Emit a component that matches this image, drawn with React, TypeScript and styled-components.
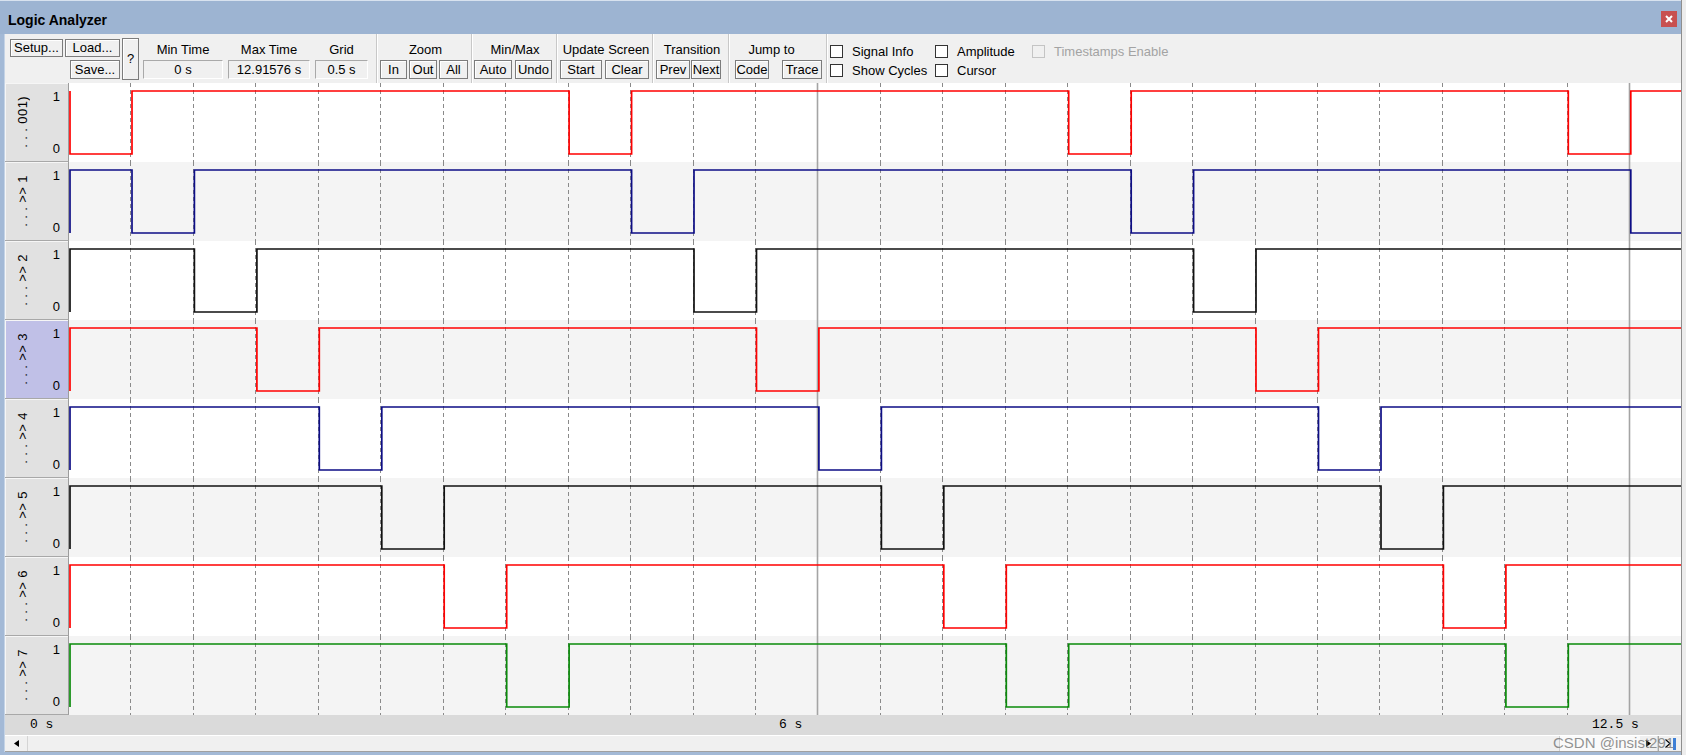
import React from 'react';
import styled, { createGlobalStyle } from 'styled-components';

const GRID = 62.45;
const ROW_H = 79;
const WAVE_W = 1612;
const HIGH_Y = 8;
const LOW_Y = 71;

interface ISignal {
  name: string;
  color: string;
  phase: number;
}

interface IGroup {
  label: string;
  width: number;
  pad: number;
  gap: number;
  shift?: number;
  buttons: { label: string; width: number }[];
}

const signals: ISignal[] = [
  { name: '. . . 001)', color: '#ff0000', phase: 0 },
  { name: '. . . >> 1', color: '#0d0d85', phase: 1 },
  { name: '. . . >> 2', color: '#111111', phase: 2 },
  { name: '. . . >> 3', color: '#ff0000', phase: 3 },
  { name: '. . . >> 4', color: '#0d0d85', phase: 4 },
  { name: '. . . >> 5', color: '#111111', phase: 5 },
  { name: '. . . >> 6', color: '#ff0000', phase: 6 },
  { name: '. . . >> 7', color: '#0a8a0a', phase: 7 },
];

const SELECTED_ROW = 3;

const groups: IGroup[] = [
  { label: 'Zoom', width: 93, pad: 2, gap: 2, buttons: [{ label: 'In', width: 27 }, { label: 'Out', width: 28 }, { label: 'All', width: 29 }] },
  { label: 'Min/Max', width: 83, pad: 1, gap: 3, buttons: [{ label: 'Auto', width: 38 }, { label: 'Undo', width: 37 }] },
  { label: 'Update Screen', width: 94, pad: 2, gap: 3, buttons: [{ label: 'Start', width: 42 }, { label: 'Clear', width: 44 }] },
  { label: 'Transition', width: 74, pad: 2, gap: 1, buttons: [{ label: 'Prev', width: 34 }, { label: 'Next', width: 30 }] },
  { label: 'Jump to', width: 96, pad: 5, gap: 13, shift: 18, buttons: [{ label: 'Code', width: 34 }, { label: 'Trace', width: 40 }] },
];

const GlobalStyle = createGlobalStyle`
  html, body {
    margin: 0;
    padding: 0;
    background: #ffffff;
  }

  body {
    font-family: "Liberation Sans", Arial, sans-serif;
    font-size: 13px;
    color: #000;
    overflow: hidden;
  }
`;

const Window = styled.div`
  width: 1686px;
  height: 755px;
  display: flex;
  position: relative;
  overflow: hidden;
`;

const Frame = styled.div`
  width: 1681px;
  display: flex;
  flex-direction: column;
`;

const RightEdge = styled.div`
  width: 5px;
  box-sizing: border-box;
  border-left: 1px solid #8e8e8e;
  background: #ededed;
`;

const TitleBar = styled.div`
  height: 34px;
  box-sizing: border-box;
  border-top: 1px solid #d8e2ef;
  background: #9db4d2;
  display: flex;
  align-items: center;
  justify-content: space-between;
  padding: 0 4px 0 8px;
`;

const Title = styled.span`
  font-weight: bold;
  font-size: 14px;
  padding-top: 4px;
`;

const CloseButton = styled.div`
  width: 16px;
  height: 16px;
  margin-top: 2px;
  background: #c85050;
  display: flex;
  align-items: center;
  justify-content: center;
`;

const Body = styled.div`
  display: flex;
  height: 718px;
`;

const SideEdge = styled.div`
  width: 5px;
  box-sizing: border-box;
  background: #a3b9d6;
  border-right: 1px solid #c4d3e6;
`;

const Content = styled.div`
  width: 1676px;
  display: flex;
  flex-direction: column;
`;

const BottomEdge = styled.div`
  height: 3px;
  background: #a3b9d6;
`;

const Toolbar = styled.div`
  height: 49px;
  background: #f0f0f0;
  display: flex;
  align-items: stretch;
`;

const FileGrid = styled.div`
  display: grid;
  grid-template-columns: 53px 55px 17px;
  grid-template-rows: 18px 19px;
  column-gap: 2px;
  row-gap: 3px;
  padding: 5px 0 0 5px;
`;

const Button = styled.button<{ $w?: number; $h?: number }>`
  width: ${({ $w }) => ($w ? `${$w}px` : '100%')};
  height: ${({ $h }) => ($h ? `${$h}px` : '19px')};
  box-sizing: border-box;
  padding: 0;
  margin: 0;
  font-family: "Liberation Sans", Arial, sans-serif;
  font-size: 13px;
  line-height: 16px;
  color: #000;
  background: #f0f0f0;
  border: 1px solid #7c7c7c;
  box-shadow: inset 1px 1px 0 #ffffff;
  white-space: nowrap;
  overflow: hidden;
`;

const SetupButton = styled(Button)`
  grid-column: 1;
  grid-row: 1;
`;

const LoadButton = styled(Button)`
  grid-column: 2;
  grid-row: 1;
`;

const SaveButton = styled(Button)`
  grid-column: 2;
  grid-row: 2;
  justify-self: end;
`;

const HelpButton = styled(Button)`
  grid-column: 3;
  grid-row: 1 / span 2;
  margin-top: -1px;
  height: 42px;
`;

const TimeGroup = styled.div`
  display: flex;
  gap: 5px;
  margin-left: 4px;
  margin-right: 8px;
`;

const Column = styled.div`
  display: flex;
  flex-direction: column;
  align-items: center;
  padding-top: 8px;
`;

const GroupLabel = styled.div<{ $shift?: number }>`
  height: 16px;
  line-height: 16px;
  white-space: nowrap;
  text-align: center;
  margin-right: ${({ $shift }) => $shift || 0}px;
`;

const ValueBox = styled.div<{ $w: number }>`
  width: ${({ $w }) => $w}px;
  height: 19px;
  margin-top: 2px;
  box-sizing: border-box;
  border: 1px solid;
  border-color: #a9a9a9 #ffffff #ffffff #a9a9a9;
  background: #f0f0f0;
  text-align: center;
  line-height: 17px;
`;

const Separator = styled.div`
  width: 0;
  border-left: 1px solid #c8c8c8;
  border-right: 1px solid #ffffff;
`;

const Group = styled.div<{ $w: number; $pad: number }>`
  width: ${({ $w }) => $w}px;
  box-sizing: border-box;
  padding-left: ${({ $pad }) => $pad}px;
  padding-top: 8px;
  display: flex;
  flex-direction: column;
`;

const ButtonRow = styled.div<{ $gap: number }>`
  display: flex;
  gap: ${({ $gap }) => $gap}px;
  margin-top: 2px;
`;

const CheckGrid = styled.div`
  display: grid;
  grid-template-columns: 105px 97px auto;
  grid-template-rows: 19px 19px;
  padding: 8px 0 0 2px;
`;

const CheckItem = styled.label<{ $disabled?: boolean }>`
  display: flex;
  align-items: center;
  gap: 9px;
  white-space: nowrap;
  color: ${({ $disabled }) => ($disabled ? '#a3a3a3' : '#000')};
`;

const CheckBox = styled.span<{ $disabled?: boolean }>`
  width: 13px;
  height: 13px;
  box-sizing: border-box;
  border: 1px solid ${({ $disabled }) => ($disabled ? '#c4c4c4' : '#333333')};
  background: ${({ $disabled }) => ($disabled ? '#f0f0f0' : '#ffffff')};
`;

const SignalList = styled.div`
  display: flex;
  flex-direction: column;
`;

const Row = styled.div`
  display: flex;
  height: ${ROW_H}px;
`;

const LabelCell = styled.div<{ $selected: boolean }>`
  width: 64px;
  box-sizing: border-box;
  display: flex;
  background: ${({ $selected }) => ($selected ? '#c0c0e7' : '#e1e1e1')};
  border-right: 1px solid #9c9c9c;
  border-bottom: 1px solid #a8a8a8;
  box-shadow: inset 1px 1px 0 #f6f6f6;
`;

const NameBox = styled.div`
  width: 34px;
  display: flex;
  align-items: center;
  justify-content: center;
`;

const SignalName = styled.span`
  writing-mode: vertical-rl;
  transform: rotate(180deg);
  white-space: nowrap;
  font-size: 13px;
  letter-spacing: 0.4px;
`;

const LevelColumn = styled.div`
  flex: 1;
  display: flex;
  flex-direction: column;
  justify-content: space-between;
  align-items: flex-end;
  padding: 6px 8px 5px 0;
  line-height: 15px;
`;

const WaveCell = styled.div<{ $shaded: boolean }>`
  width: ${WAVE_W}px;
  height: ${ROW_H}px;
  background: ${({ $shaded }) => ($shaded ? '#f4f4f4' : '#ffffff')};

  svg {
    display: block;
  }
`;

const TimeAxis = styled.div`
  height: 20px;
  background: #dadada;
  position: relative;
  font-family: "Liberation Mono", "DejaVu Sans Mono", monospace;
  font-size: 13px;
`;

const AxisLabel = styled.span`
  position: absolute;
  top: 0;
  line-height: 20px;
  white-space: pre;
`;

const ScrollBar = styled.div`
  height: 17px;
  box-sizing: border-box;
  border-top: 1px solid #ffffff;
  border-bottom: 1px solid #a0a0a0;
  background: #f0f0f0;
  display: flex;
`;

const ScrollArrow = styled.div<{ $w: number }>`
  width: ${({ $w }) => $w}px;
  display: flex;
  align-items: center;
  justify-content: center;
  border-right: 1px solid #d4d4d4;
`;

const ScrollTrack = styled.div`
  flex: 1;
`;

const ScrollThumb = styled.div`
  width: 80px;
  background: #fafafa;
  border-left: 1px solid #d0d0d0;
`;

const EndButton = styled.div`
  width: 22px;
  display: flex;
  align-items: center;
  justify-content: center;
  gap: 2px;
  border-left: 1px solid #a8a8a8;
`;

const Watermark = styled.span`
  position: absolute;
  left: 1553px;
  top: 734px;
  font-size: 15px;
  line-height: 18px;
  color: rgba(110, 110, 110, 0.75);
  white-space: nowrap;
`;

const buildPath = (phase: number) => {
  const end = WAVE_W / GRID;
  const edges: number[] = [];
  for (let s = phase; s < end; s += 8) {
    edges.push(s, s + 1);
  }
  let level = phase === 0 ? LOW_Y : HIGH_Y;
  const other = level === LOW_Y ? HIGH_Y : LOW_Y;
  let d = `M 1 ${other} V ${level}`;
  edges.forEach((t) => {
    if (t <= 0 || t >= end) return;
    const x = t * GRID + 0.5;
    level = level === LOW_Y ? HIGH_Y : LOW_Y;
    d += ` H ${x.toFixed(1)} V ${level}`;
  });
  d += ` H ${WAVE_W}`;
  return d;
};

const ticks = Array.from({ length: 25 }, (_, i) => i + 1);

function Waveform({ signal }: { signal: ISignal }) {
  return (
    <svg width={WAVE_W} height={ROW_H}>
      {ticks.map((t) => {
        const x = Math.round(t * GRID - 1) + 0.5;
        const major = t === 12 || t === 25;
        return (
          <line
            key={t}
            x1={x}
            x2={x}
            y1={0}
            y2={ROW_H}
            stroke={major ? '#a4a4a4' : '#8a8a8a'}
            strokeWidth={major ? 1.6 : 1}
            strokeDasharray={major ? undefined : '4 3'}
          />
        );
      })}
      <path d={buildPath(signal.phase)} fill="none" stroke={signal.color} strokeWidth={1.7} />
    </svg>
  );
}

function App() {
  return (
    <Window>
      <GlobalStyle />
      <Frame>
        <TitleBar>
          <Title>Logic Analyzer</Title>
          <CloseButton>
            <svg width="8" height="8" viewBox="0 0 8 8">
              <path d="M1 1 L7 7 M7 1 L1 7" stroke="#fff" strokeWidth="2" />
            </svg>
          </CloseButton>
        </TitleBar>
        <Body>
          <SideEdge />
          <Content>
            <Toolbar>
              <FileGrid>
                <SetupButton $h={18}>Setup...</SetupButton>
                <LoadButton $h={18}>Load...</LoadButton>
                <SaveButton $w={50}>Save...</SaveButton>
                <HelpButton>?</HelpButton>
              </FileGrid>
              <TimeGroup>
                <Column>
                  <GroupLabel>Min Time</GroupLabel>
                  <ValueBox $w={80}>0 s</ValueBox>
                </Column>
                <Column>
                  <GroupLabel>Max Time</GroupLabel>
                  <ValueBox $w={82}>12.91576 s</ValueBox>
                </Column>
                <Column>
                  <GroupLabel>Grid</GroupLabel>
                  <ValueBox $w={53}>0.5 s</ValueBox>
                </Column>
              </TimeGroup>
              {groups.map((g) => (
                <React.Fragment key={g.label}>
                  <Separator />
                  <Group $w={g.width} $pad={g.pad}>
                    <GroupLabel $shift={g.shift}>{g.label}</GroupLabel>
                    <ButtonRow $gap={g.gap}>
                      {g.buttons.map((b) => (
                        <Button key={b.label} $w={b.width}>{b.label}</Button>
                      ))}
                    </ButtonRow>
                  </Group>
                </React.Fragment>
              ))}
              <Separator />
              <CheckGrid>
                <CheckItem><CheckBox />Signal Info</CheckItem>
                <CheckItem><CheckBox />Amplitude</CheckItem>
                <CheckItem $disabled><CheckBox $disabled />Timestamps Enable</CheckItem>
                <CheckItem><CheckBox />Show Cycles</CheckItem>
                <CheckItem><CheckBox />Cursor</CheckItem>
              </CheckGrid>
            </Toolbar>

            <SignalList>
              {signals.map((s, i) => (
                <Row key={s.name}>
                  <LabelCell $selected={i === SELECTED_ROW}>
                    <NameBox>
                      <SignalName>{s.name}</SignalName>
                    </NameBox>
                    <LevelColumn>
                      <span>1</span>
                      <span>0</span>
                    </LevelColumn>
                  </LabelCell>
                  <WaveCell $shaded={i % 2 === 1}>
                    <Waveform signal={s} />
                  </WaveCell>
                </Row>
              ))}
            </SignalList>

            <TimeAxis>
              <AxisLabel style={{ left: 25 }}>0 s</AxisLabel>
              <AxisLabel style={{ left: 774 }}>6 s</AxisLabel>
              <AxisLabel style={{ left: 1587 }}>12.5 s</AxisLabel>
            </TimeAxis>

            <ScrollBar>
              <ScrollArrow $w={22}>
                <svg width="5" height="7" viewBox="0 0 5 7">
                  <path d="M5 0 L0 3.5 L5 7 Z" fill="#000" />
                </svg>
              </ScrollArrow>
              <ScrollTrack />
              <ScrollThumb />
              <ScrollArrow $w={17}>
                <svg width="5" height="7" viewBox="0 0 5 7">
                  <path d="M0 0 L5 3.5 L0 7 Z" fill="#000" />
                </svg>
              </ScrollArrow>
              <EndButton>
                <svg width="6" height="9" viewBox="0 0 6 9">
                  <path d="M0.5 0.5 L5 4.5 L0.5 8.5" fill="none" stroke="#000" strokeWidth="1.2" />
                </svg>
                <svg width="3" height="12" viewBox="0 0 3 12">
                  <rect x="0" y="0" width="3" height="12" fill="#3d7fd6" />
                </svg>
              </EndButton>
            </ScrollBar>
          </Content>
        </Body>
        <BottomEdge />
      </Frame>
      <RightEdge />
      <Watermark>CSDN @insist291</Watermark>
    </Window>
  );
}

export default App;
